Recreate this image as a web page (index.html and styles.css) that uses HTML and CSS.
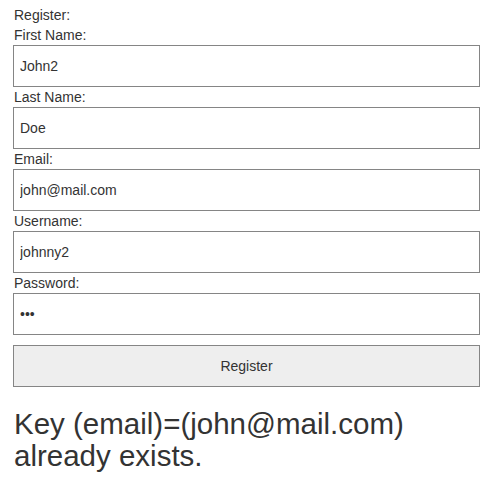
FILE: index.html
```html
<!DOCTYPE html>
<html>
<head>
<meta charset="utf-8">
<link rel="stylesheet" href="styles.css">
</head>
<body>
<div class="page">
  <div class="title">Register:</div>
  <form class="form">
    <label class="label">First Name:</label>
    <input class="field" type="text" value="John2">
    <label class="label">Last Name:</label>
    <input class="field" type="text" value="Doe">
    <label class="label">Email:</label>
    <input class="field" type="text" value="john@mail.com">
    <label class="label">Username:</label>
    <input class="field" type="text" value="johnny2">
    <label class="label">Password:</label>
    <input class="field" type="password" value="abc">
    <button class="btn" type="button">Register</button>
  </form>
  <div class="error">Key (email)=(john@mail.com) already exists.</div>
</div>
</body>
</html>
```
FILE: styles.css
```css
html, body {
  margin: 0;
  padding: 0;
  background: #fff;
}
.page {
  padding: 5px 18px 0 13px;
  font-family: "Liberation Sans", Arial, sans-serif;
  color: #333;
  font-size: 14px;
}
.title, .label {
  display: block;
  line-height: 20px;
  height: 20px;
  padding-left: 1px;
}
.form {
  display: flex;
  flex-direction: column;
  margin: 0;
}
.field {
  box-sizing: border-box;
  width: 100%;
  height: 42px;
  margin: 0;
  border: 1px solid #858585;
  border-radius: 0;
  padding: 0 6px;
  font-family: "Liberation Sans", Arial, sans-serif;
  font-size: 14px;
  color: #333;
  background: #fff;
  outline: none;
}
.btn {
  box-sizing: border-box;
  width: 100%;
  height: 42px;
  margin-top: 10px;
  border: 1px solid #858585;
  border-radius: 0;
  background: #eeeeee;
  font-family: "Liberation Sans", Arial, sans-serif;
  font-size: 14px;
  color: #333;
}
.error {
  margin-top: 21px;
  font-size: 29.5px;
  line-height: 32px;
  padding-left: 1px;
}
```
